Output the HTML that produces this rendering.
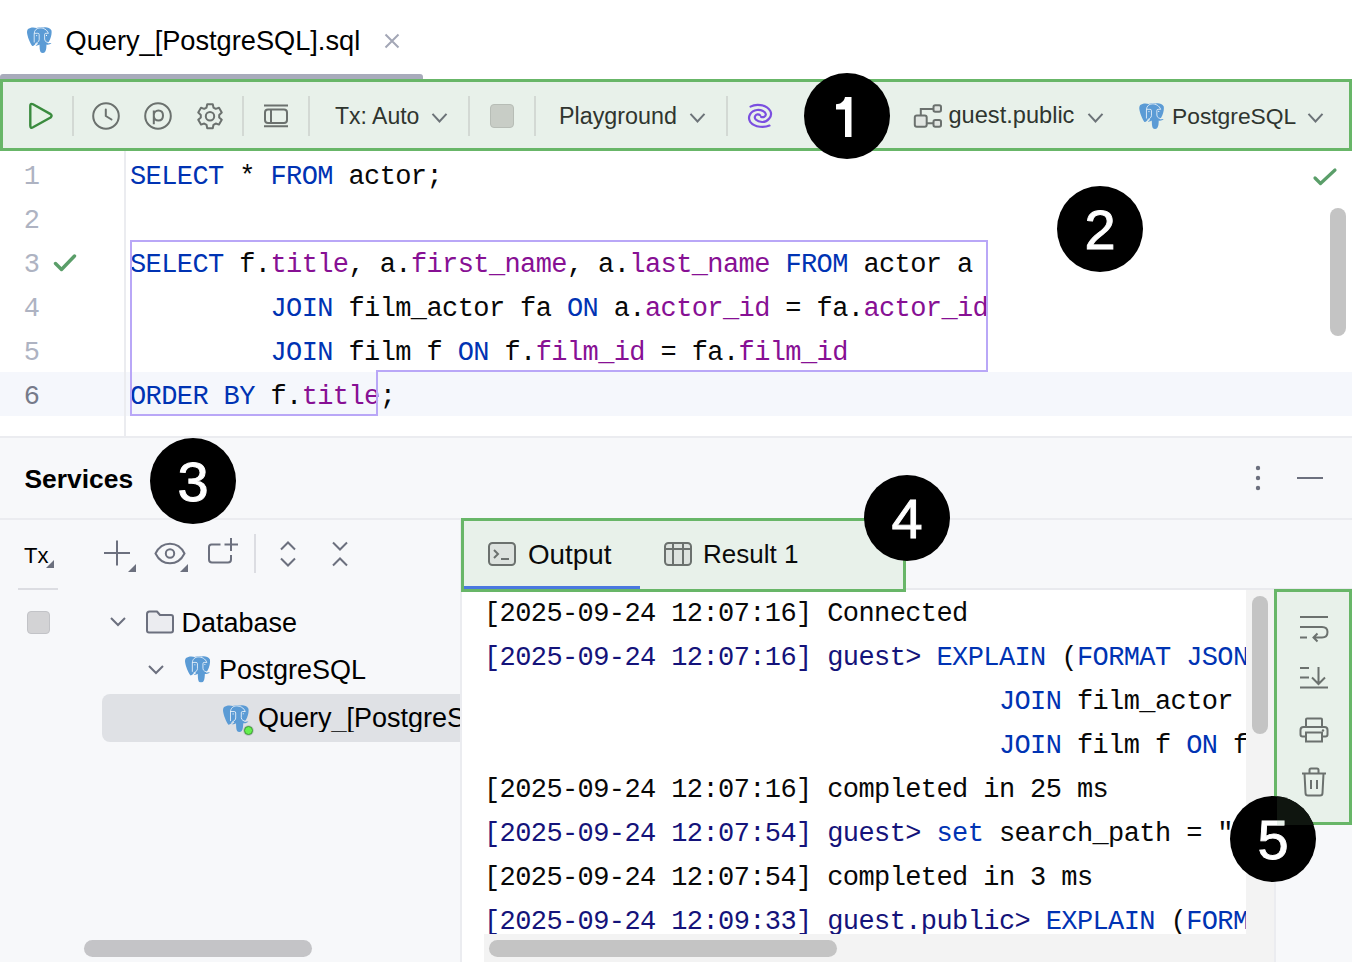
<!DOCTYPE html>
<html><head><meta charset="utf-8">
<style>
*{box-sizing:border-box}
html,body{margin:0;padding:0}
body{width:1352px;height:962px;position:relative;overflow:hidden;background:#fff;font-family:"Liberation Sans",sans-serif;color:#1e1f22}
.a{position:absolute}
.t{position:absolute;white-space:pre;line-height:1}
.sep{position:absolute;width:2px;background:#d3d9d4}
.mono{font-family:"Liberation Mono",monospace}
.k{color:#0033b3}
.f{color:#871094}
.n{color:#14137a}
.circ{position:absolute;width:86px;height:86px;border-radius:50%;background:#000;color:#fff;font-size:56px;line-height:88px;text-align:center;-webkit-text-stroke:0.9px #fff}
svg{position:absolute;overflow:visible}
</style></head><body>

<!-- ============ TAB BAR ============ -->
<svg width="0" height="0" style="position:absolute"><defs>
<symbol id="eleph" viewBox="0 0 25 26"><path d="M1 2C3 .2 7 0 9.5 1C11 0 14 0 16.5 .5C19 0 23 .5 24.5 3.5C25 7 24 11 22 14.5L20.5 16C22 16.5 23.5 16 24.5 16C23 17.5 21 18 19.5 17.5C19.3 20 19.5 23 18 25C17 26.3 14.5 26.3 13.5 25C12.5 23 12.7 20 12.5 17.5C11.5 18.2 10 18.8 8.5 18.6C9.5 17.8 10.5 17.2 11 16.8L10 16C8.5 17 6.5 19.5 5.2 19C3 16 .5 10 0 5.5C0 4 .3 2.8 1 2Z" fill="#5b9bd5"/><path d="M7.2 15.5V6.8C7.2 3 10 .9 13 .9C16.5 .9 20 2.5 21.4 6.4M7.2 6.3H10.8Q12.2 6.3 12.2 7.7V12.5Q12.2 14.5 10.5 15.3L8.2 16.9M21.4 6.3H18.8Q17.6 6.3 17.6 7.5V12Q17.6 14 19.2 14.8L21.5 15.8" fill="none" stroke="#fff" stroke-width=".75"/><circle cx="9.7" cy="8.6" r=".55" fill="#fff"/><circle cx="19.5" cy="8.4" r=".55" fill="#fff"/></symbol>
</defs></svg>
<svg style="left:27px;top:27px" width="25" height="26"><use href="#eleph"/></svg>
<div id="tabtext" class="t" style="left:65.5px;top:27.3px;font-size:27.2px;color:#000">Query_[PostgreSQL].sql</div>
<svg style="left:384px;top:33px" width="16" height="16" viewBox="0 0 16 16"><path d="M1.5 1.5L14.5 14.5M14.5 1.5L1.5 14.5" stroke="#a3a7b6" stroke-width="2"/></svg>
<div class="a" style="left:0;top:74px;width:423px;height:5px;background:#a8abbb;border-radius:3px 3px 0 0"></div>

<!-- ============ TOOLBAR (box 1) ============ -->
<div class="a" style="left:0;top:79px;width:1352px;height:72px;background:#e8f1ea;border:3px solid #68b668"></div>
<svg style="left:28px;top:102px" width="26" height="28" viewBox="0 0 26 28"><path d="M2.3 3.8Q2.3 .9 5 2.3L22.6 12.1Q24.6 13.8 22.6 15.5L5 25.3Q2.3 26.7 2.3 23.8Z" fill="#e6f2e6" stroke="#3a8b3e" stroke-width="2.4" stroke-linejoin="round"/></svg>
<div class="sep" style="left:72px;top:96px;height:40px"></div>
<svg style="left:92px;top:102px" width="28" height="28" viewBox="0 0 28 28"><circle cx="14" cy="14" r="12.8" fill="none" stroke="#6b716e" stroke-width="2"/><path d="M13.8 7.5V14L19.5 17.5" fill="none" stroke="#6b716e" stroke-width="2" stroke-linecap="round" stroke-linejoin="round"/></svg>
<svg style="left:144px;top:102px" width="28" height="28" viewBox="0 0 28 28"><circle cx="14" cy="14" r="12.8" fill="none" stroke="#6b716e" stroke-width="2"/><path d="M9.8 22.2V8.5M9.8 13.8C9.8 10.6 11.8 8.6 14.4 8.6C17.1 8.6 19 10.6 19 13.6C19 16.6 17.1 18.6 14.4 18.6C11.8 18.6 9.8 16.6 9.8 13.6" fill="none" stroke="#6b716e" stroke-width="2"/></svg>
<svg style="left:196px;top:102px" width="28" height="28" viewBox="0 0 28 28"><path d="M10.52 5.58L11.23 2.22L16.77 2.22L17.48 5.58L19.73 6.87L23.00 5.81L25.76 10.60L23.21 12.91L23.21 15.49L25.76 17.80L23.00 22.59L19.73 21.53L17.48 22.82L16.77 26.18L11.23 26.18L10.52 22.82L8.27 21.53L5.00 22.59L2.24 17.80L4.79 15.49L4.79 12.91L2.24 10.60L5.00 5.81L8.27 6.87Z" fill="none" stroke="#6b716e" stroke-width="2" stroke-linejoin="round"/><circle cx="14" cy="14.2" r="4.2" fill="none" stroke="#6b716e" stroke-width="2"/></svg>
<div class="sep" style="left:242px;top:96px;height:40px"></div>
<svg style="left:262px;top:102px" width="28" height="28" viewBox="0 0 28 28"><path d="M2 3.5H26M2 24.2H26" stroke="#6b716e" stroke-width="2"/><rect x="3" y="7.5" width="22" height="13.5" rx="3" fill="none" stroke="#6b716e" stroke-width="2"/><path d="M9 7.5V21" stroke="#6b716e" stroke-width="2"/></svg>
<div class="sep" style="left:308px;top:96px;height:40px"></div>
<div id="tx" class="t" style="left:335px;top:104.5px;font-size:23px;color:#2f352f">Tx: Auto</div>
<svg style="left:431px;top:112px" width="18" height="12" viewBox="0 0 18 12"><path d="M1.5 1.8L8.5 9.5L15.5 1.8" fill="none" stroke="#6c7378" stroke-width="2"/></svg>
<div class="sep" style="left:468px;top:96px;height:40px"></div>
<div class="a" style="left:490px;top:104px;width:24px;height:24px;border-radius:4px;background:#c8cdc6;border:1.5px solid #b7bdb6"></div>
<div class="sep" style="left:534px;top:96px;height:40px"></div>
<div id="pg" class="t" style="left:559px;top:104.5px;font-size:23.3px;color:#2f352f">Playground</div>
<svg style="left:689px;top:112px" width="18" height="12" viewBox="0 0 18 12"><path d="M1.5 1.8L8.5 9.5L15.5 1.8" fill="none" stroke="#6c7378" stroke-width="2"/></svg>
<div class="sep" style="left:726px;top:96px;height:40px"></div>
<svg style="left:746px;top:102px" width="28" height="28" viewBox="0 0 28 28"><path d="M4.5 4.6C9 2.2 20 1.6 24.3 9C27 14 21.5 20.3 16 20C10.5 19.6 7.8 16.5 9.2 14C10.2 12.2 12.6 11.8 14 13.2M23.5 23.6C19 25.5 9 26 4.2 19.8C1.2 15.2 4.5 8.6 11 8C15.5 7.6 19.4 9.6 19.8 12.2C20.1 14.6 17.2 15.6 15.1 14.9" fill="none" stroke="#7b4fe0" stroke-width="2.2" stroke-linecap="round"/></svg>
<svg style="left:912px;top:102px" width="32" height="28" viewBox="0 0 32 28"><rect x="2.8" y="13.4" width="11.9" height="11.4" rx="2" fill="#e1e6e2" stroke="#6b716e" stroke-width="2"/><rect x="21.5" y="3.3" width="7.5" height="6.5" rx="1.8" fill="#e1e6e2" stroke="#6b716e" stroke-width="2"/><rect x="21.5" y="18" width="7.5" height="6.8" rx="1.8" fill="#e1e6e2" stroke="#6b716e" stroke-width="2"/><path d="M8.8 13.4V7H21.5M14.7 21.2H21.5" fill="none" stroke="#6b716e" stroke-width="2"/></svg>
<div id="gp" class="t" style="left:948.5px;top:104.2px;font-size:23.6px;color:#2f352f">guest.public</div>
<svg style="left:1087px;top:112px" width="18" height="12" viewBox="0 0 18 12"><path d="M1.5 1.8L8.5 9.5L15.5 1.8" fill="none" stroke="#6c7378" stroke-width="2"/></svg>
<svg style="left:1139px;top:103px" width="25.5" height="26"><use href="#eleph"/></svg>
<div id="psql" class="t" style="left:1172px;top:104.8px;font-size:22.8px;color:#2f352f">PostgreSQL</div>
<svg style="left:1307px;top:112px" width="18" height="12" viewBox="0 0 18 12"><path d="M1.5 1.8L8.5 9.5L15.5 1.8" fill="none" stroke="#6c7378" stroke-width="2"/></svg>

<!-- ============ EDITOR ============ -->
<div class="a" style="left:0;top:372px;width:1352px;height:44px;background:#f5f7fc"></div>
<div class="a" style="left:124px;top:151px;width:2px;height:285px;background:#ebecf0"></div>
<div class="a" style="left:0;top:436px;width:1352px;height:2px;background:#ebecf0"></div>

<div id="gut" class="t mono" style="left:0;top:155px;width:40px;text-align:right;font-size:27px;line-height:44px;color:#aeb3c2">1
2
3
4
5
<span style="color:#767a8a">6</span></div>

<div id="code" class="t mono" style="left:130px;top:155px;font-size:27px;letter-spacing:-0.6px;line-height:44px;color:#080808"><span class="k">SELECT</span> * <span class="k">FROM</span> actor;

<span class="k">SELECT</span> f.<span class="f">title</span>, a.<span class="f">first_name</span>, a.<span class="f">last_name</span> <span class="k">FROM</span> actor a
         <span class="k">JOIN</span> film_actor fa <span class="k">ON</span> a.<span class="f">actor_id</span> = fa.<span class="f">actor_id</span>
         <span class="k">JOIN</span> film f <span class="k">ON</span> f.<span class="f">film_id</span> = fa.<span class="f">film_id</span>
<span class="k">ORDER BY</span> f.<span class="f">title</span>;</div>

<svg style="left:52px;top:252px" width="27" height="22" viewBox="0 0 27 22"><path d="M3.5 11.5L9.5 17.5L22.5 4" fill="none" stroke="#5a9e69" stroke-width="3.4" stroke-linecap="round" stroke-linejoin="round"/></svg>
<svg style="left:1312px;top:168px" width="27" height="22" viewBox="0 0 27 22"><path d="M3 10L8.5 15.5L23 2" fill="none" stroke="#5a9e69" stroke-width="3.2" stroke-linecap="round" stroke-linejoin="round"/></svg>
<div class="a" style="left:1330px;top:208px;width:16px;height:128px;border-radius:8px;background:#c4c4c4"></div>
<!-- statement outline -->
<svg style="left:0;top:0" width="1352" height="962"><path d="M131 241H987V371H377V415H131Z" fill="none" stroke="#b9a7f7" stroke-width="2"/></svg>

<!-- ============ SERVICES ============ -->
<div class="a" style="left:0;top:438px;width:1352px;height:524px;background:#f7f8fa"></div>
<div id="svc" class="t" style="left:24.5px;top:466px;font-size:26.4px;font-weight:bold;color:#000">Services</div>
<div class="a" style="left:0;top:518px;width:1352px;height:2px;background:#ebecf0"></div>

<!-- left panel -->
<div class="a" style="left:460px;top:520px;width:2px;height:442px;background:#ebecf0"></div>
<div id="txl" class="t" style="left:24px;top:545px;font-size:22px;color:#000">Tx</div>
<svg style="left:0;top:0" width="1352" height="962">
<path d="M46 568L54 560V568Z" fill="#6c707e"/>
<path d="M128 572L136 564V572Z" fill="#6c707e"/>
<path d="M180 572L188 564V572Z" fill="#6c707e"/>
<path d="M117 540.5V565.5M104 553H130" stroke="#6c707e" stroke-width="2"/>
<path d="M155.5 553.5C159 546.5 164 543.8 170 543.8C176 543.8 181 546.5 184.5 553.5C181 560.5 176 563.3 170 563.3C164 563.3 159 560.5 155.5 553.5Z" fill="none" stroke="#6c707e" stroke-width="2"/>
<circle cx="170" cy="553.5" r="4.2" fill="none" stroke="#6c707e" stroke-width="2"/>
<path d="M220.5 544.5H211.5Q209 544.5 209 547V559.5Q209 562.5 212 562.5H228Q231 562.5 231 559.5V555" fill="none" stroke="#6c707e" stroke-width="2"/>
<path d="M231 538V551M224.5 544.5H238" stroke="#6c707e" stroke-width="2"/>
<path d="M281 549.5L288 542.5L295 549.5M281 558.5L288 565.5L295 558.5" fill="none" stroke="#6c707e" stroke-width="2"/>
<path d="M333 542.5L340 549.5L347 542.5M333 565.5L340 558.5L347 565.5" fill="none" stroke="#6c707e" stroke-width="2"/>
<path d="M111 618L118 625L125 618" fill="none" stroke="#6c707e" stroke-width="2"/>
<path d="M149 666L156 673L163 666" fill="none" stroke="#6c707e" stroke-width="2"/>
<path d="M147 614Q147 611.5 149.5 611.5H157L160 615H171Q173 615 173 617V630.5Q173 632.5 171 632.5H149Q147 632.5 147 630.5Z" fill="#ebecf0" stroke="#6c707e" stroke-width="2" stroke-linejoin="round"/>
<path d="M1258 468m-2.2 0a2.2 2.2 0 1 0 4.4 0a2.2 2.2 0 1 0-4.4 0M1258 478m-2.2 0a2.2 2.2 0 1 0 4.4 0a2.2 2.2 0 1 0-4.4 0M1258 488m-2.2 0a2.2 2.2 0 1 0 4.4 0a2.2 2.2 0 1 0-4.4 0" fill="#6c707e"/>
<path d="M1297 478H1323" stroke="#6c707e" stroke-width="2"/>
</svg>
<div class="a" style="left:18px;top:588px;width:40px;height:2px;background:#dcdde2"></div>
<div class="sep" style="left:254px;top:534px;height:39px;background:#dcdde2"></div>
<div class="a" style="left:26.5px;top:610.5px;width:23px;height:23px;border-radius:4px;background:#d3d3d5;border:1.5px solid #c2c3c7"></div>
<svg style="left:185px;top:656px" width="25.5" height="26.5"><use href="#eleph"/></svg>
<div id="tree1" class="t" style="left:181.5px;top:609.5px;font-size:27px;color:#000">Database</div>
<div id="tree2" class="t" style="left:219px;top:656.5px;font-size:27px;color:#000">PostgreSQL</div>
<div class="a" style="left:102px;top:694px;width:358px;height:48px;background:#dfe1e5;border-radius:8px 0 0 8px"></div>
<svg style="left:223px;top:705px" width="26" height="27"><use href="#eleph"/></svg>
<div class="a" style="left:243.5px;top:725.5px;width:9.6px;height:9.6px;border-radius:50%;background:#66f04f;border:1.5px solid #3f9a36;box-shadow:0 0 0 0.8px #b8bcc4"></div>
<div id="tree3" class="t" style="left:258px;top:704.5px;width:202px;overflow:hidden;font-size:27px;color:#000">Query_[PostgreSQL]</div>
<div class="a" style="left:84px;top:940px;width:228px;height:17px;border-radius:9px;background:#c4c4c7"></div>

<!-- right panel -->
<div class="a" style="left:462px;top:589px;width:784px;height:373px;background:#fff"></div>
<div class="a" style="left:462px;top:588px;width:890px;height:2px;background:#e9eaee"></div>
<div class="a" style="left:1246px;top:590px;width:28px;height:372px;background:#f3f3f3"></div>
<div class="a" style="left:1252px;top:596px;width:16px;height:138px;border-radius:8px;background:#c4c4c4"></div>

<div id="out" class="t mono" style="left:484px;top:592px;width:762px;height:342px;overflow:hidden;font-size:27px;letter-spacing:-0.6px;line-height:44px;color:#080808">[2025-09-24 12:07:16] Connected
<span class="n">[2025-09-24 12:07:16] guest&gt; </span><span class="k">EXPLAIN</span> (<span class="k">FORMAT JSON</span>
                                 <span class="k">JOIN</span> film_actor fa
                                 <span class="k">JOIN</span> film f <span class="k">ON</span> f.film_id
[2025-09-24 12:07:16] completed in 25 ms
<span class="n">[2025-09-24 12:07:54] guest&gt; </span><span class="k">set</span> search_path = "guest"
[2025-09-24 12:07:54] completed in 3 ms
<span class="n">[2025-09-24 12:09:33] guest.public&gt; </span><span class="k">EXPLAIN</span> (<span class="k">FORMAT</span></div>
<div class="a" style="left:484px;top:934px;width:762px;height:28px;background:#f3f3f3"></div>
<div class="a" style="left:489px;top:940px;width:348px;height:17px;border-radius:9px;background:#c4c4c4"></div>

<!-- box 4 -->
<div class="a" style="left:461px;top:518px;width:445px;height:74px;background:#e8f1ea;border:3px solid #68b668"></div>
<svg style="left:0;top:0" width="1352" height="962">
<rect x="489" y="543" width="26" height="22" rx="3.5" fill="#dde3df" stroke="#6b716e" stroke-width="2"/>
<path d="M494 550L498 554L494 558M501 559H509" fill="none" stroke="#6b716e" stroke-width="2"/>
<rect x="665" y="543" width="26" height="22" rx="3.5" fill="#dde3df" stroke="#6b716e" stroke-width="2"/>
<path d="M665 549H691M673 543V565M683 543V565" fill="none" stroke="#6b716e" stroke-width="2"/>
</svg>
<div id="outtab" class="t" style="left:528px;top:540.5px;font-size:27.8px;color:#0a0a0a">Output</div>
<div class="a" style="left:464px;top:586px;width:176px;height:3px;background:#4a78e0"></div>
<div id="restab" class="t" style="left:703px;top:541px;font-size:26px;color:#0a0a0a">Result 1</div>

<!-- box 5 -->
<div class="a" style="left:1274px;top:590px;width:2px;height:372px;background:#ebecf0"></div>
<div class="a" style="left:1274px;top:589px;width:78px;height:236px;background:#e8f1ea;border:3px solid #68b668"></div>

<svg style="left:0;top:0" width="1352" height="962">
<path d="M1300 617H1328M1300 627H1322Q1327.5 627 1327.5 632Q1327.5 637.5 1322 637.5H1314M1317.5 633.5L1313.5 637.5L1317.5 641.5M1300 637.5H1307" fill="none" stroke="#6b716e" stroke-width="2"/>
<path d="M1300 668H1309M1300 677.5H1309M1300 687.5H1328M1318.5 667V684M1312 677.5L1318.5 684L1325 677.5" fill="none" stroke="#6b716e" stroke-width="2"/>
<path d="M1306 727V719.5Q1306 718.5 1307 718.5H1321Q1322 718.5 1322 719.5V727M1306 736.5H1302.5Q1300.5 736.5 1300.5 734.5V730Q1300.5 727 1303.5 727H1324.5Q1327.5 727 1327.5 730V734.5Q1327.5 736.5 1325.5 736.5H1322M1306 732.5H1322V741.5H1306Z" fill="none" stroke="#6b716e" stroke-width="2"/>
<circle cx="1323" cy="730.5" r="1.2" fill="#6b716e"/>
<path d="M1302 773.5H1326M1309.5 773.5V770Q1309.5 768.5 1311 768.5H1317Q1318.5 768.5 1318.5 770V773.5M1304.5 773.5L1305.5 793Q1305.5 795.5 1308 795.5H1320Q1322.5 795.5 1322.5 793L1323.5 773.5M1311 780V789M1317 780V789" fill="none" stroke="#6b716e" stroke-width="2"/>
</svg>
<!-- ============ CIRCLES ============ -->
<div class="circ" style="left:804px;top:73px"></div>
<svg style="left:0;top:0" width="1352" height="962"><path d="M845 97H851.5V137H845V109.5H836V104.3C840.5 104.1 844 101.8 845 97Z" fill="#fff"/></svg>
<div class="circ" style="left:1057px;top:186px">2</div>
<div class="circ" style="left:150px;top:438px">3</div>
<div class="circ" style="left:864px;top:475px">4</div>
<div class="circ" style="left:1230px;top:796px">5</div>
<div class="a" style="left:1277px;top:796px;width:40px;height:29px;overflow:hidden"><div class="a" style="left:-47px;top:0;width:86px;height:86px;border-radius:50%;background:#0f150f"></div></div>
<div class="a" style="left:1277px;top:796px;width:40px;height:29px;overflow:hidden"><div class="t" style="left:-47px;top:0;width:86px;height:86px;font-size:56px;line-height:88px;text-align:center;color:#e8f1ea;-webkit-text-stroke:0.9px #e8f1ea">5</div></div>

</body></html>
